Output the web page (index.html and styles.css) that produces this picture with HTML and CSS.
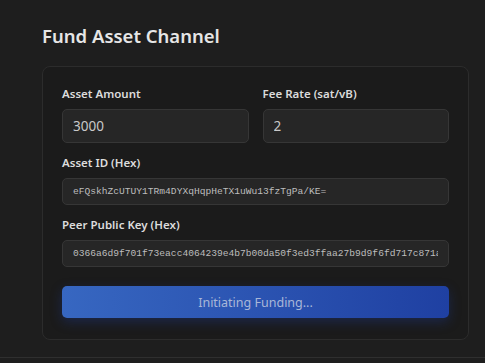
FILE: index.html
```html
<!DOCTYPE html>
<html lang="en">
<head>
    <meta charset="UTF-8">
    <meta name="viewport" content="width=device-width, initial-scale=1.0">
    <title>Fund Asset Channel</title>
    <link rel="stylesheet" href="styles.css">
</head>
<body>
    <section class="panel">
        <h2 class="panel-title">Fund Asset Channel</h2>

        <form class="fund-card">
            <div class="row-2">
                <div class="field">
                    <label>Asset Amount</label>
                    <input class="text-input" type="text" value="3000">
                </div>
                <div class="field">
                    <label>Fee Rate (sat/vB)</label>
                    <input class="text-input" type="text" value="2">
                </div>
            </div>

            <div class="field">
                <label>Asset ID (Hex)</label>
                <input class="text-input mono" type="text" value="eFQskhZcUTUY1TRm4DYXqHqpHeTX1uWu13fzTgPa/KE=">
            </div>

            <div class="field">
                <label>Peer Public Key (Hex)</label>
                <input class="text-input mono" type="text" value="0366a6d9f701f73eacc4064239e4b7b00da50f3ed3ffaa27b9d9f6fd717c871a2b">
            </div>

            <button type="button" class="fund-button" disabled>Initiating Funding...</button>
        </form>
    </section>
    <div class="page-footer"></div>
</body>
</html>
```

FILE: styles.css
```css
body {
    background-color: #1e1e1e;
    font-family: "Noto Sans", "Open Sans", sans-serif;
    margin: 0;
    padding: 0;
    color: #e4e4e4;
}

.panel {
    padding: 24px 16px 17px 42px;
}

.panel-title {
    font-size: 18.5px;
    font-weight: 600;
    color: #e6e6e6;
    margin: 0 0 18px 0;
    line-height: 24px;
}

.fund-card {
    background-color: #1b1b1b;
    border: 1px solid #2c2c2c;
    border-radius: 8px;
    padding: 19px 19px 21px 19px;
    display: flex;
    flex-direction: column;
    gap: 12px;
}

.row-2 {
    display: grid;
    grid-template-columns: 1fr 1fr;
    gap: 14px;
}

.field {
    display: flex;
    flex-direction: column;
    gap: 7px;
}

.field label {
    font-size: 11.5px;
    font-weight: 600;
    color: #dcdcdc;
    line-height: 16px;
}

.text-input {
    box-sizing: border-box;
    width: 100%;
    height: 34px;
    background-color: #262626;
    border: 1px solid #363636;
    border-radius: 5px;
    padding: 0 10px;
    font-family: "Noto Sans", "Open Sans", sans-serif;
    font-size: 13.5px;
    color: #c9c9c9;
    outline: none;
}

.text-input.mono {
    height: 27px;
    font-family: "Liberation Mono", monospace;
    font-size: 9.6px;
    color: #bdbdbd;
}

.fund-button {
    margin-top: 7px;
    height: 32px;
    border: none;
    border-radius: 5px;
    background: linear-gradient(90deg, #3767c1, #1f40a2);
    color: #a9b7d8;
    font-family: "Noto Sans", "Open Sans", sans-serif;
    font-size: 12.5px;
    box-shadow: 0 4px 12px rgba(30, 60, 160, 0.35);
    cursor: not-allowed;
}

.page-footer {
    border-top: 1px solid #2f2f2f;
    height: 20px;
}
```
